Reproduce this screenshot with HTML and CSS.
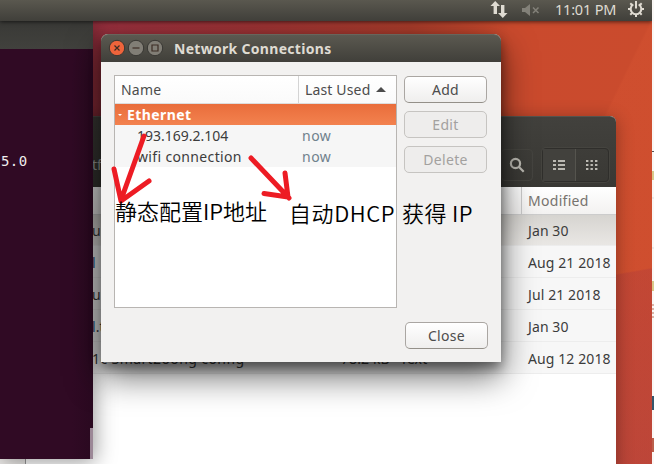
FILE: index.html
```html
<!DOCTYPE html>
<html lang="en">
<head>
<meta charset="utf-8">
<title>Network Connections</title>
<link rel="stylesheet" href="styles.css">
</head>
<body>
<main class="desktop">
  <section class="files">
    <header class="files-bar">
      <span class="path">tftpboot</span>
      <span class="tool search"><svg width="16" height="16" viewBox="0 0 16 16"><circle cx="6.5" cy="6.5" r="4.6"/><path d="M10 10l4.7 4.7"/></svg></span>
      <span class="tools">
        <span class="tool active"><svg width="12" height="12" viewBox="0 0 12 12"><path d="M0 2h3M5 2h7M0 6h3M5 6h7M0 10h3M5 10h7"/></svg></span>
        <span class="tool"><svg width="12" height="12" viewBox="0 0 12 12"><path d="M0 2h2.4M4.5 2h2.4M9 2h2.4M0 6h2.4M4.5 6h2.4M9 6h2.4M0 10h2.4M4.5 10h2.4M9 10h2.4"/></svg></span>
      </span>
    </header>
    <div class="files-body">
      <aside class="sidebar"></aside>
      <div class="listing">
        <div class="row head"><span></span><span></span><span></span><span class="modified">Modified</span></div>
        <div class="row selected"><span>u</span><span></span><span></span><span>Jan 30</span></div>
        <div class="row"><span class="blue">l</span><span></span><span></span><span>Aug 21 2018</span></div>
        <div class="row"><span>u</span><span></span><span></span><span>Jul 21 2018</span></div>
        <div class="row"><span><i class="blue">l</i>.t</span><span></span><span></span><span>Jan 30</span></div>
        <div class="row"><span class="config">1c Smart2oong config</span><span>78.2 kB</span><span>Text</span><span>Aug 12 2018</span></div>
      </div>
    </div>
  </section>

  <section class="terminal">
    <header class="terminal-bar"></header>
    <div class="terminal-body"><pre>5.0</pre><i class="thumb"></i></div>
  </section>

  <nav class="panel">
    <svg class="net" width="18" height="17" viewBox="0 0 18 17"><path d="M5.2 0L10 5H7v8H3.6V5H.5zM12.8 17L8 12h3V4h3.4v8h3.1z"/></svg>
    <svg class="mute" width="18" height="12" viewBox="0 0 18 12"><path d="M0 4h3l5-4v12L3 8H0z"/><path class="cross" d="M11 3.5l5.5 5.5M16.500 3.500L11 9"/></svg>
    <span class="clock">11:01 PM</span>
    <svg class="gear" width="18" height="18" viewBox="0 0 18 18"><path class="teeth" d="M9 14.500v2.500M3.500 9H1M17 9h-2.500M5.100 5.100L3.300 3.300M12.900 5.100l1.800-1.800M5.100 12.900l-1.800 1.800M12.900 12.900l1.800 1.800"/><path d="M6.300 4.400a5.300 5.300 0 1 0 5.400 0M9 1v7.500"/></svg>
  </nav>

  <section class="dialog">
    <header class="titlebar">
      <svg width="56" height="18" viewBox="0 0 56 18">
        <circle class="close" cx="9" cy="9" r="7.700"/><path d="M6.500 6.500l5 5m0-5l-5 5"/>
        <circle cx="28" cy="9" r="7.700"/><path d="M24.500 9h7"/>
        <circle cx="47" cy="9" r="7.700"/><path d="M44 6h6v6h-6z"/>
      </svg>
      <h1>Network Connections</h1>
    </header>
    <div class="content">
      <div class="tree">
        <div class="tree-head"><span class="name">Name</span><span class="last">Last Used<i class="sort"></i></span></div>
        <div class="group"><i class="expander"></i><b>Ethernet</b></div>
        <div class="item"><span class="ip">193.169.2.104</span><span class="now">now</span></div>
        <div class="item"><span class="wifi">wifi connection</span><span class="now">now</span></div>
      </div>
      <div class="actions">
        <button>Add</button>
        <button disabled>Edit</button>
        <button disabled>Delete</button>
      </div>
    </div>
    <footer><button>Close</button></footer>
  </section>

  <svg class="arrows" width="200" height="90" viewBox="100 125 200 90">
    <path d="M144 136L121 200M114 169l7 32 28-20M251 158l38 40M285 173l3 24-24-3.500"/>
  </svg>
  <p class="note static">静态配置IP地址</p>
  <p class="note dhcp">自动DHCP</p>
  <p class="note get">获得 IP</p>

  <aside class="edge">
    <svg width="2" height="464" viewBox="0 0 2 464"><path stroke="#555" d="M0 151.500h2"/><path stroke="#b79b20" d="M1 171v9M1 281v10"/><path stroke="#ddd" d="M0 198h2M0 248h2"/><path stroke="#b8735d" stroke-dasharray="2 2" d="M1 304v16"/><path stroke="#35566c" stroke-width="2" d="M1 396v14"/><path stroke="#bb604c" stroke-width="2" d="M1 438v14"/></svg>
  </aside>
</main>
</body>
</html>
```

FILE: styles.css
```css
* { box-sizing: border-box; }
body { margin: 0; overflow: hidden; font: 14px/20px "Noto Sans", "Open Sans", sans-serif; color: #3c3c3c; }
i { font-style: normal; }
.desktop {
  position: relative; width: 654px; height: 464px; overflow: hidden;
  background:
    linear-gradient(170deg, transparent 66%, #b03c3c66 66.300%, #a83c4477 100%),
    linear-gradient(116deg, transparent 75%, #dc583444 75.300%),
    linear-gradient(90deg, #98303f 90px, #9d3335 250px, #a83c2b 410px, #ca4a2d 510px, #ca4b2d);
}
.panel {
  position: absolute; z-index: 4; top: 0; left: 0; width: 652px; height: 21px;
  display: flex; align-items: center; justify-content: flex-end; padding-right: 7px;
  background: linear-gradient(#5a584f, #403f3a); color: #dfdbd2;
  box-shadow: 0 1px 4px #0009;
}
.panel svg { fill: #dfdbd2; flex: none; }
.net { margin-right: 14px; margin-top: -2px; }
.mute { margin-right: 15px; margin-top: -2px; }
.panel .mute { fill: #838179; }
.cross { stroke: #838179; stroke-width: 1.500; }
.clock { width: 61px; margin-right: 11px; margin-top: -4px; white-space: nowrap; letter-spacing: -.2px; font-size: 14.500px; }
.panel .gear { fill: none; stroke: #dfdbd2; stroke-width: 2; margin-top: -3px; }

.terminal { position: absolute; z-index: 2; left: 0; top: 21px; width: 93px; height: 438px; box-shadow: 2px 3px 20px #0006; }
.terminal-bar { height: 28px; background: linear-gradient(#393936, #41413d); }
.terminal-body { position: relative; height: 410px; background: linear-gradient(90deg, #300a24 72px, #2a0920); padding-top: 102px; }
.terminal pre { margin: 0; padding-left: 1px; color: #eee; font: 14px/20px "DejaVu Sans Mono", monospace; letter-spacing: .4px; }
.thumb { position: absolute; right: 0; bottom: 0; width: 3px; height: 31px; background: #9b8796; }

.files { position: absolute; z-index: 1; left: 0; top: 116px; width: 616px; height: 360px; background: #fff; border-radius: 0 6px 0 0; box-shadow: 0 3px 18px #0005; }
.files-bar { height: 71px; display: flex; align-items: center; padding: 26px 7px 0 92px; background: linear-gradient(#42413d, #393834); border-radius: 0 6px 0 0; border-top: 1px solid #55534d; }
.path { color: #aaa; flex: 1; }
.tool { display: flex; align-items: center; justify-content: center; width: 32px; height: 32px; }
.tool svg { fill: none; stroke: #bbb9b2; stroke-width: 2.200; }
.search { border: 1px solid #45443f; border-radius: 4px; margin-right: 9px; }
.tools { display: flex; border: 1px solid #2f2e2b; border-radius: 4px; box-shadow: 0 0 0 1px #45443f; }
.active { width: 33px; background: #42413d; border-right: 1px solid #55544e; }
.files-body { display: flex; height: 289px; }
.sidebar { width: 26px; background: #eceae8; border-right: 1px solid #999; flex: none; }
.listing { flex: 1; }
.row { display: grid; grid-template-columns: 249px 59px 128px 1fr; height: 32px; align-items: center; padding: 2px 0 0 66px; background: #f7f7f7; border-bottom: 1px solid #ededed; color: #3c3c3c; white-space: nowrap; letter-spacing: .1px; }
.row.head { height: 28px; padding-top: 0; background: linear-gradient(#fff, #f3f2f1); color: #77736e; border-color: #ccc; align-items: stretch; line-height: 27px; }
.modified { border-left: 1px solid #ccc; padding-left: 6px; margin-left: -7px; letter-spacing: .3px; }
.row.selected { height: 31px; background: linear-gradient(#d6d4d0, #e9e7e4); }
.config { letter-spacing: .4px; }
.blue { color: #2c5089; }

.dialog { position: absolute; z-index: 3; left: 101px; top: 34px; width: 400px; height: 328px; background: #f2f1f0; border-radius: 7px 7px 0 0; box-shadow: 0 14px 34px #0009, 0 6px 12px #0006; }
.titlebar { height: 28px; display: flex; align-items: center; gap: 10px; padding-left: 7px; background: linear-gradient(#5b5950, #403f3a); border-top: 1px solid #68655c; border-radius: 7px 7px 0 0; }
.titlebar svg { margin-top: -1px; }
.titlebar circle { fill: #817e76; stroke: #383733; }
.titlebar .close { fill: #ef643b; }
.titlebar path { fill: none; stroke: #3d2d25; stroke-width: 1.200; }
h1 { margin: 0; color: #dfdbd2; font-size: 14px; line-height: 20px; letter-spacing: .3px; white-space: nowrap; }
.content { display: flex; gap: 7px; padding: 13px 13px 0; }
.tree { width: 283px; height: 233px; background: #fff; border: 1px solid #b8b5b2; }
.tree-head { display: flex; height: 28px; line-height: 27px; background: linear-gradient(#fff, #fafafa); border-bottom: 1px solid #ddd; color: #4c4c4c; }
.name { width: 184px; padding-left: 6px; border-right: 1px solid #d4d4d4; letter-spacing: .2px; }
.last { display: flex; align-items: center; padding-left: 6px; white-space: nowrap; letter-spacing: .15px; }
.sort { margin-left: 6px; border: 5px solid transparent; border-top: 0; border-bottom-color: #4c4c4c; }
.group { display: flex; align-items: center; height: 21px; padding-left: 3px; background: linear-gradient(#e96d3b, #f3824f); color: #fff; }
.group b { letter-spacing: .4px; }
.expander { border: 2px solid transparent; border-top-color: #fff; border-bottom: 0; margin-right: 5px; }
.item { display: flex; height: 21px; line-height: 21px; padding-left: 22px; background: #f6f6f6; white-space: nowrap; }
.item > :first-child { width: 165px; }
.wifi { letter-spacing: .35px; }
.now { color: #70818d; letter-spacing: .5px; }
.actions { display: flex; flex-direction: column; gap: 8px; padding-top: 1px; }
button { display: block; width: 83px; height: 27px; padding: 1px 0 0; border: 1px solid #aaa6a2; border-bottom-color: #949089; border-radius: 5px; background: linear-gradient(#fff, #efeeed); color: #4c4c4c; font: inherit; letter-spacing: .3px; }
button:disabled { color: #a3a19f; background: #eeedec; border-color: #c6c4c1; }
footer { display: flex; justify-content: flex-end; padding: 14px 13px; }

.arrows { position: absolute; z-index: 5; left: 100px; top: 125px; fill: none; stroke: #ed1c24; stroke-width: 5; stroke-linecap: round; stroke-linejoin: round; }
.note { position: absolute; z-index: 6; margin: 0; color: #000; font: 22px/30px "Noto Sans CJK SC", sans-serif; font-weight: 350; white-space: nowrap; }
.static { left: 115px; top: 195px; }
.dhcp { left: 289px; top: 197px; letter-spacing: .6px; }
.get { left: 402px; top: 197px; letter-spacing: .4px; }
.edge { position: absolute; z-index: 7; right: 0; top: 0; width: 2px; height: 464px; background: #faf8f6; }
.edge svg { display: block; stroke-width: 1; }
```
